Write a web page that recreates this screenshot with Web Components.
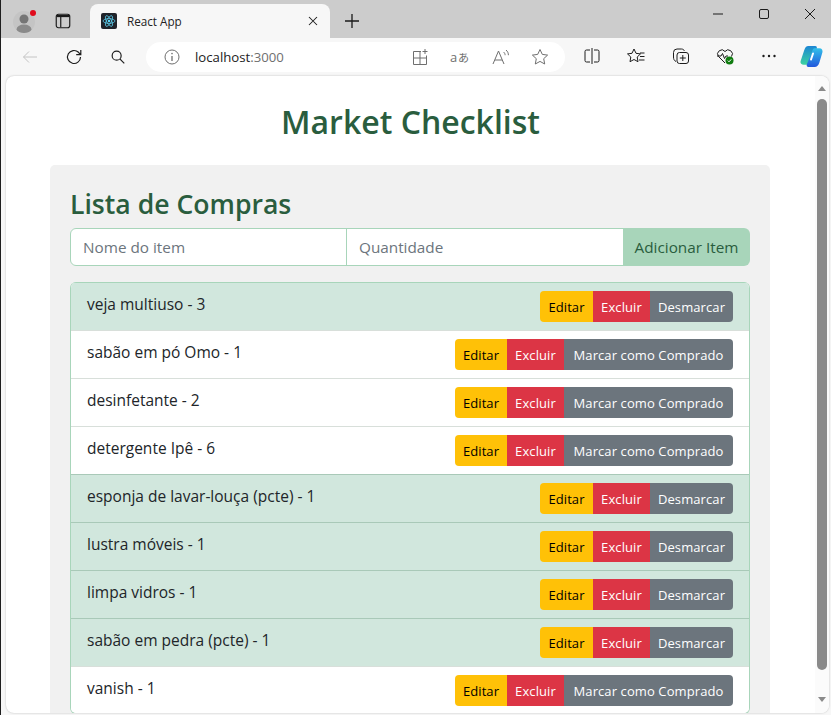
<!DOCTYPE html>
<html lang="pt">
<head>
<meta charset="utf-8">
<title>React App</title>
<style>
  html, body { margin: 0; height: 715px; overflow: hidden; background: #f7f7f7; }
  body { font-family: "Open Sans", "Noto Sans", sans-serif; }
</style>
</head>
<body>
<browser-window>
  <market-checklist></market-checklist>
</browser-window>

<script>
const icon = (w, body, extra = "") =>
  `<svg width="${w}" height="${w}" viewBox="0 0 20 20" fill="none" stroke="currentColor" stroke-width="1" ${extra}>${body}</svg>`;

class TabStrip extends HTMLElement {
  constructor() {
    super();
    this.attachShadow({ mode: "open" });
    this.shadowRoot.innerHTML = `
      <style>
        :host { display: flex; align-items: flex-end; height: 38px; background: #cccccc; color: #1a1a1a; box-sizing: border-box; }
        .profile { width: 22px; height: 22px; margin: 0 0 5px 12px; border-radius: 50%; background: #c4c4c4; overflow: hidden; }
        .dot { position: absolute; left: 29px; top: 10px; width: 6px; height: 6px; border-radius: 50%; background: #e00b1c; }
        .side { display: flex; align-items: center; justify-content: center; width: 20px; height: 20px; margin: 0 17px 7px 18px; }
        .tab { display: flex; align-items: center; width: 240px; height: 34px; box-sizing: border-box; padding: 0 9px 0 11px; background: #f7f7f7; border-radius: 8px 8px 0 0; }
        .fav { display: flex; align-items: center; justify-content: center; width: 16px; height: 16px; background: #20232a; border-radius: 2px; }
        .title { flex: 1; margin-left: 10px; font-size: 11.7px; color: #222; }
        .close { display: flex; }
        .plus { display: flex; margin: 0 0 7px 12px; }
        .controls { display: flex; margin: 0 11px 14px auto; gap: 26px; }
      </style>
      <div class="profile">
        <svg width="22" height="22" viewBox="0 0 22 22"><circle cx="11" cy="8" r="4.500" fill="#757575"/><ellipse cx="11" cy="18.500" rx="7.500" ry="5" fill="#8a8a8a"/></svg>
      </div>
      <span class="dot"></span>
      <div class="side">${icon(18, '<rect x="2.500" y="2.500" width="15" height="15" rx="2.500" stroke-width="1.300"/><path d="M3 4.500h14" stroke-width="2.400"/><path d="M7.500 4v13" stroke-width="1.300"/>')}</div>
      <div class="tab">
        <span class="fav"><svg width="14" height="14" viewBox="0 0 20 20" fill="none" stroke="#61dafb" stroke-width="1"><circle cx="10" cy="10" r="1.700" fill="#61dafb" stroke="none"/><ellipse cx="10" cy="10" rx="8.500" ry="3.400"/><ellipse cx="10" cy="10" rx="8.500" ry="3.400" transform="rotate(60 10 10)"/><ellipse cx="10" cy="10" rx="8.500" ry="3.400" transform="rotate(120 10 10)"/></svg></span>
        <span class="title">React App</span>
        <span class="close">${icon(16, '<path d="M5 5l10 10M15 5L5 15" stroke-width="1.300"/>')}</span>
      </div>
      <span class="plus">${icon(20, '<path d="M10 3v14M3 10h14" stroke-width="1.300"/>')}</span>
      <div class="controls">
        ${icon(20, '<path d="M5 10h10"/>')}
        ${icon(20, '<rect x="5.500" y="5.500" width="9" height="9" rx="1.500"/>')}
        ${icon(20, '<path d="M5 5l10 10M15 5L5 15"/>')}
      </div>`;
  }
}
customElements.define("tab-strip", TabStrip);

class NavBar extends HTMLElement {
  constructor() {
    super();
    this.attachShadow({ mode: "open" });
    this.shadowRoot.innerHTML = `
      <style>
        :host { display: flex; align-items: center; height: 38px; box-sizing: border-box; padding: 0 0 0 19px; background: #f7f7f7; color: #1c1c1c; }
        .btn { display: flex; align-items: center; justify-content: center; width: 20px; height: 20px; }
        .address { display: flex; align-items: center; width: 419px; height: 30px; margin: 0 17px 0 18px; padding: 0 15px 0 16px; box-sizing: border-box; background: #fff; border-radius: 15px; color: #6f6f6f; }
        .url { flex: 1; margin-left: 13px; font-size: 13.200px; color: #6f6f6f; }
        .url b { font-weight: 400; color: #222; }
        .tools { display: flex; gap: 20px; }
      </style>
      <span class="btn" style="color:#c4c4c4">${icon(20, '<path d="M17 10H3.500M9 4.500L3.500 10 9 15.500"/>')}</span>
      <span class="btn" style="margin-left:24px">${icon(20, '<path d="M16.500 10a6.500 6.500 0 1 1-2-4.700L16.500 7.500M16.800 3v4.600h-4.600" stroke-width="1.200"/>')}</span>
      <span class="btn" style="margin-left:24px">${icon(18, '<circle cx="8.500" cy="8.500" r="5" stroke-width="1.300"/><path d="M12.300 12.300L17 17" stroke-width="1.300"/>')}</span>
      <div class="address">
        ${icon(20, '<circle cx="10" cy="10" r="7"/><path d="M10 9v5" stroke-width="1.300"/><circle cx="10" cy="6.600" r=".8" fill="currentColor" stroke="none"/>')}
        <span class="url"><b>localhost</b>:3000</span>
        <div class="tools">
          ${icon(20, '<path d="M11 4.500H3.500v13h13v-9M3.500 11h13M10 4.500V17.500"/><path d="M15 2v5M12.500 4.500h5"/>')}
          <svg width="20" height="20" viewBox="0 0 20 20"><text x="0" y="14.500" font-size="13" fill="currentColor" font-family="Open Sans">a</text><text x="8" y="15" font-size="11" fill="currentColor" font-family="Noto Sans CJK JP">あ</text></svg>
          <svg width="20" height="20" viewBox="0 0 20 20" fill="none" stroke="currentColor" stroke-width="1" style="margin-left:1px;margin-right:-1px"><path d="M2 17L7.500 4 13 17M4 13h7"/><path d="M12.500 5c1.200 1 1.600 2 1.600 3.200M15 3c1.800 1.500 2.400 3.300 2.400 5.200"/></svg>
          ${icon(20, '<path d="M10 2.500l2.300 4.900 5.300.7-3.900 3.600 1 5.300-4.700-2.600-4.700 2.600 1-5.300L2.400 8.100l5.300-.7z"/>')}
        </div>
      </div>
      <div class="tools" style="gap:24.250px">
        ${icon(20, '<path d="M8 4H4.500A1.500 1.500 0 0 0 3 5.500v9A1.500 1.500 0 0 0 4.500 16H8M12 4h3.500A1.500 1.500 0 0 1 17 5.500v9a1.500 1.500 0 0 1-1.500 1.500H12M10 2v16"/>')}
        ${icon(20, '<path d="M8 3l2 4.300 4.500.6-3.300 3.100.8 4.700L8 13.500l-4 2.200.8-4.700L1.500 7.900 6 7.300z"/><path d="M14 7h4.500M14 10.500h4.500M13 14h5.500"/>')}
        ${icon(20, '<path d="M5 15.500C3 14.500 2.500 13 2.500 11V6.500A3.500 3.500 0 0 1 6 3h4.500C12 3 13 4 13.500 5"/><rect x="6" y="6.500" width="11.500" height="11" rx="2.500"/><path d="M11.800 9v6M8.800 12h6"/>')}
        <svg width="20" height="20" viewBox="0 0 20 20" fill="none" stroke="currentColor" stroke-width="1"><path d="M10 17L3.500 10.500A4 4 0 0 1 10 5.500a4 4 0 0 1 6.500 5"/><path d="M2 10h4l1.500-2.500 2 5 1.500-2.500h2"/><circle cx="14.500" cy="14.500" r="4" fill="#107c10" stroke="none"/><path d="M12.800 14.600l1.200 1.200 2.200-2.400" stroke="#fff"/></svg>
        <svg width="20" height="20" viewBox="0 0 20 20"><g fill="currentColor"><circle cx="4.500" cy="10" r="1.200"/><circle cx="10" cy="10" r="1.200"/><circle cx="15.500" cy="10" r="1.200"/></g></svg>
        <svg width="25" height="25" viewBox="0 0 24 24" style="margin:-2px 0 0 -4px">
          <defs>
            <linearGradient id="ca" x1="0" y1="0" x2="0" y2="1"><stop offset="0" stop-color="#1c86d4"/><stop offset="1" stop-color="#3cd3a0"/></linearGradient>
            <linearGradient id="cb" x1="0" y1="0" x2="0" y2="1"><stop offset="0" stop-color="#32c0ea"/><stop offset="1" stop-color="#2358dc"/></linearGradient>
          </defs>
          <path d="M9 2h6.500c1.500 0 2 1.200 1.500 2.500L12 18c-.5 1.500-1.500 2-2.500 2H4.500C2.500 20 1 18.500 1.500 16.500L5 6C5.800 3.500 7 2 9 2z" fill="url(#ca)"/>
          <path d="M15 4h4.500C22 4 23 6 22.500 8l-3 10c-.8 2.500-2.200 4-4.500 4H9c-1.200 0-2-1.200-1.500-2.400L13 6c.4-1.200 1-2 2-2z" fill="url(#cb)"/>
          <path d="M13.500 9L11.500 15" stroke="#fff" stroke-width="1.800" stroke-linecap="round"/>
        </svg>
      </div>`;
  }
}
customElements.define("nav-bar", NavBar);

class BrowserWindow extends HTMLElement {
  constructor() {
    super();
    this.attachShadow({ mode: "open" });
    this.shadowRoot.innerHTML = `
      <style>
        :host { display: flex; flex-direction: column; position: relative; width: 831px; height: 715px; background: #f7f7f7; border-left: 1px solid #1e1e1e; box-sizing: border-box; overflow: hidden; }
        .panel { display: flex; flex: 1; min-height: 0; margin: 0 2px 2px 5px; background: #fff; border-radius: 8px; box-shadow: 0 0 2px rgba(0,0,0,.25); overflow: hidden; }
        .view { flex: 1; min-width: 0; overflow: hidden; }
        .scroll { display: flex; flex-direction: column; align-items: center; width: 14px; background: #fbfbfb; }
        .up, .down { width: 0; height: 0; margin-top: 10px; border: 4.500px solid transparent; border-top: 0; border-bottom: 5px solid #8a8a8a; }
        .down { margin: 0 0 11px; border-top: 5px solid #8a8a8a; border-bottom: 0; }
        .thumb { width: 10px; height: 571px; margin: 8px 0 auto; background: #8a8a8a; border-radius: 5px; }
      </style>
      <tab-strip></tab-strip>
      <nav-bar></nav-bar>
      <div class="panel">
        <div class="view"><slot></slot></div>
        <div class="scroll"><span class="up"></span><span class="thumb"></span><span class="down"></span></div>
      </div>`;
  }
}
customElements.define("browser-window", BrowserWindow);

class ItemForm extends HTMLElement {
  constructor() {
    super();
    this.attachShadow({ mode: "open" });
    this.shadowRoot.innerHTML = `
      <style>
        :host { display: flex; height: 38px; box-sizing: border-box; }
        .field { display: flex; align-items: center; box-sizing: border-box; padding: 0 12px; background: #fff; border: 1px solid #a8d5ba; font-size: 15.300px; color: #6c757d; }
        .a { width: 277px; border-radius: 6px 0 0 6px; }
        .b { width: 277px; margin-left: -1px; border-right: 0; }
        .add { display: flex; align-items: center; justify-content: center; flex: 1; background: #a8d5ba; border-radius: 0 6px 6px 0; font-size: 15.300px; color: #2a5d3e; }
      </style>
      <span class="field a">Nome do item</span>
      <span class="field b">Quantidade</span>
      <span class="add">Adicionar Item</span>`;
  }
}
customElements.define("item-form", ItemForm);

class ShopItem extends HTMLElement {
  constructor() {
    super();
    this.attachShadow({ mode: "open" });
  }
  connectedCallback() {
    const bought = this.hasAttribute("bought");
    this.shadowRoot.innerHTML = `
      <style>
        :host { display: flex; justify-content: space-between; height: 48px; box-sizing: border-box; padding: 8px 16px 0; background: ${bought ? "#d1e7dd" : "#fff"}; border-top: 1px solid ${bought ? "#a9c9b8" : "#d8dfda"}; color: #212529; }
        :host(:first-child) { border-top: 1px solid #a8d5ba; }
        :host(:last-child) { height: 47px; }
        .name { margin-top: 2px; font-size: 15.500px; line-height: 22px; }
        .group { display: flex; height: 31px; font-size: 13px; letter-spacing: .1px; }
        .group span { display: flex; align-items: center; justify-content: center; color: #fff; }
        .group .edit { width: ${bought ? 53 : 52}px; background: #ffc107; color: #000; border-radius: 4px 0 0 4px; }
        .del { width: 57px; background: #dc3545; }
        .mark { width: ${bought ? 83 : 169}px; background: #6c757d; border-radius: 0 4px 4px 0; }
      </style>
      <span class="name">${this.getAttribute("label")}</span>
      <div class="group">
        <span class="edit">Editar</span>
        <span class="del">Excluir</span>
        <span class="mark">${bought ? "Desmarcar" : "Marcar como Comprado"}</span>
      </div>`;
  }
}
customElements.define("shop-item", ShopItem);

class MarketChecklist extends HTMLElement {
  constructor() {
    super();
    this.attachShadow({ mode: "open" });
    const items = [
      ["veja multiuso - 3", true],
      ["sabão em pó Omo - 1", false],
      ["desinfetante - 2", false],
      ["detergente Ipê - 6", false],
      ["esponja de lavar-louça (pcte) - 1", true],
      ["lustra móveis - 1", true],
      ["limpa vidros - 1", true],
      ["sabão em pedra (pcte) - 1", true],
      ["vanish - 1", false],
    ];
    this.shadowRoot.innerHTML = `
      <style>
        :host { display: block; padding-top: 21px; color: #2a5d3e; }
        h1 { margin: 0 0 18px; font-size: 32px; line-height: 50px; font-weight: 600; text-align: center; }
        .card { margin: 0 45px 0 44px; padding: 20px 20px 0; height: 560px; background: #f1f1f1; border-radius: 5px; box-sizing: border-box; }
        h2 { margin: 0 0 5px; font-size: 26.600px; line-height: 38px; font-weight: 600; }
        .list { margin-top: 16px; border: 1px solid #a8d5ba; border-top: 0; border-radius: 6px; background: #fff; overflow: hidden; }
      </style>
      <h1>Market Checklist</h1>
      <div class="card">
        <h2>Lista de Compras</h2>
        <item-form></item-form>
        <div class="list">
          ${items.map(([label, bought]) => `<shop-item label="${label}" ${bought ? "bought" : ""}></shop-item>`).join("")}
        </div>
      </div>`;
  }
}
customElements.define("market-checklist", MarketChecklist);
</script>
</body>
</html>
